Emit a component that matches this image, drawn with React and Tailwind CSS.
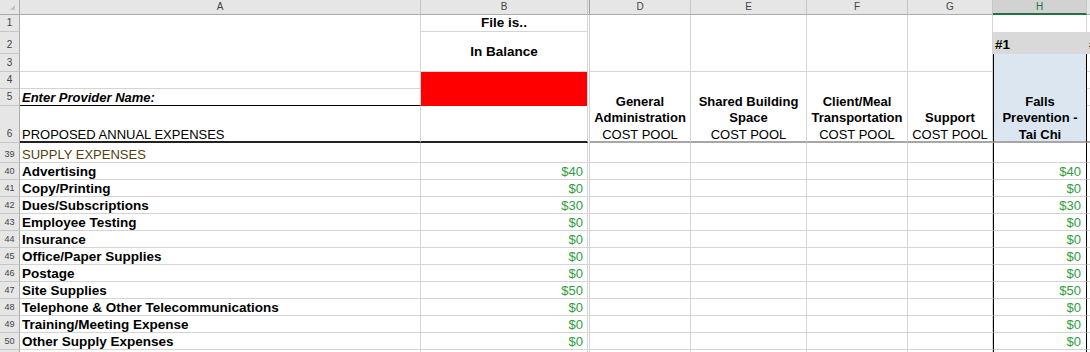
import React from "react";

const COLS = "grid grid-cols-[20px_401px_167px_2px_101px_116px_101px_85px_94px_1fr]";
const G = "border-[#d4d4d4]";

const rows = [
  { n: 39, label: "SUPPLY EXPENSES", kind: "section" },
  { n: 40, label: "Advertising", v: "$40" },
  { n: 41, label: "Copy/Printing", v: "$0" },
  { n: 42, label: "Dues/Subscriptions", v: "$30" },
  { n: 43, label: "Employee Testing", v: "$0" },
  { n: 44, label: "Insurance", v: "$0" },
  { n: 45, label: "Office/Paper Supplies", v: "$0" },
  { n: 46, label: "Postage", v: "$0" },
  { n: 47, label: "Site Supplies", v: "$50" },
  { n: 48, label: "Telephone & Other Telecommunications", v: "$0" },
  { n: 49, label: "Training/Meeting Expense", v: "$0" },
  { n: 50, label: "Other Supply Expenses", v: "$0" },
  { n: "", label: "", v: "" },
];

function ColHead({ children, cls = "" }) {
  return (
    <div className={`flex items-center justify-center bg-[#e6e6e6] border-r border-b border-r-[#c6c6c6] border-b-[#ababab] text-[10px] text-[#444] leading-none ${cls}`}>
      {children}
    </div>
  );
}

function DataRow({ r }) {
  const h = r.kind === "section" ? "h-[20px]" : "h-[17px]";
  return (
    <div className={`${COLS} ${h}`}>
      <div className="flex items-end justify-center bg-[#e6e6e6] border-r border-b border-r-[#ababab] border-b-[#c6c6c6] text-[9px] text-[#444] leading-none pb-[3px]">
        {r.n}
      </div>
      <div className={`flex items-end border-r border-b ${G} pl-[2px] leading-[14px] whitespace-nowrap overflow-hidden ${r.kind === "section" ? "text-[13px] text-[#524210]" : "text-[13.5px] font-bold text-black"}`}>
        {r.label}
      </div>
      <div className={`flex items-end justify-end border-r border-b ${G} pr-[4px] leading-[14px] text-[13px] text-[#2f9e3a]`}>
        {r.v || ""}
      </div>
      <div className={`border-r border-b ${G}`} />
      <div className={`border-r border-b ${G}`} />
      <div className={`border-r border-b ${G}`} />
      <div className={`border-r border-b ${G}`} />
      <div className={`border-r border-b ${G}`} />
      <div className={`flex items-end justify-end border-l border-r border-l-black border-r-black border-b border-b-[#d4d4d4] pr-[5px] leading-[14px] text-[13px] text-[#2f9e3a]`}>
        {r.v || ""}
      </div>
      <div className={`border-b ${G}`} />
    </div>
  );
}

function Head({ cls, lines }) {
  return (
    <div className={`${cls} flex flex-col items-center justify-end border-r border-r-[#d4d4d4] border-b-2 border-b-[#a6a6a6] text-[13px] text-center`}>
      <div className="flex flex-col items-center leading-[16.5px] translate-y-[2px]">
        {lines.map(([t, b], i) => (
          <span key={i} className={b ? "font-bold" : ""}>{t}</span>
        ))}
      </div>
    </div>
  );
}

export default function App() {
  return (
    <div className="w-[1090px] h-[352px] overflow-hidden bg-white font-['Liberation_Sans',Arial,sans-serif] text-black">
      <div className={`${COLS} grid-rows-[15px_17px_22px_18px_17px_17px_37px]`}>
        {/* column header row */}
        <div className="col-start-1 row-start-1 relative bg-[#e6e6e6] border-r border-b border-r-[#ababab] border-b-[#ababab]">
          <svg className="absolute left-[10px] top-[5px]" width="5" height="5" viewBox="0 0 5 5">
            <polygon points="5,0 5,5 0,5" fill="#c2c2c2" />
          </svg>
        </div>
        <ColHead cls="col-start-2 row-start-1">A</ColHead>
        <ColHead cls="col-start-3 row-start-1">B</ColHead>
        <div className="col-start-4 row-start-1 bg-[#e6e6e6] border-r border-b border-r-[#a0a0a0] border-b-[#ababab]" />
        <ColHead cls="col-start-5 row-start-1">D</ColHead>
        <ColHead cls="col-start-6 row-start-1">E</ColHead>
        <ColHead cls="col-start-7 row-start-1">F</ColHead>
        <ColHead cls="col-start-8 row-start-1">G</ColHead>
        <div className="col-start-9 row-start-1 flex items-center justify-center bg-[#d2d2d2] border-r border-r-[#c6c6c6] border-b-2 border-b-[#217346] text-[10px] text-[#217346] leading-none">
          H
        </div>
        <div className="col-start-10 row-start-1 bg-[#e6e6e6] border-b border-b-[#ababab]" />

        {/* row numbers */}
        {[
          ["row-start-2", "1"],
          ["row-start-3", "2"],
          ["row-start-4", "3"],
          ["row-start-5", "4"],
          ["row-start-6", "5"],
          ["row-start-7", "6"],
        ].map(([rs, n]) => (
          <div
            key={n}
            className={`col-start-1 ${rs} flex items-end justify-center bg-[#e6e6e6] border-r border-b border-r-[#ababab] border-b-[#c6c6c6] text-[10px] text-[#444] leading-none pb-[3px]`}
          >
            {n}
          </div>
        ))}

        {/* A1:A3 */}
        <div className={`col-start-2 row-start-2 row-span-3 border-r border-b ${G}`} />
        {/* B1 */}
        <div className={`col-start-3 row-start-2 flex items-center justify-center border-r border-b ${G} text-[13.5px] font-bold leading-none`}>
          File is..
        </div>
        {/* B2:B3 */}
        <div className={`col-start-3 row-start-3 row-span-2 flex items-center justify-center border-r border-b ${G} text-[13.5px] font-bold leading-none`}>
          In Balance
        </div>
        {/* C hidden */}
        <div className={`col-start-4 row-start-2 row-span-6 border-r ${G}`} />
        {/* D1:G3 merged blocks */}
        <div className={`col-start-5 row-start-2 row-span-3 border-r border-b ${G}`} />
        <div className={`col-start-6 row-start-2 row-span-3 border-r border-b ${G}`} />
        <div className={`col-start-7 row-start-2 row-span-3 border-r border-b ${G}`} />
        <div className={`col-start-8 row-start-2 row-span-3 border-r border-b ${G}`} />
        {/* H1, I1 */}
        <div className={`col-start-9 row-start-2 border-r ${G}`} />
        <div className="col-start-10 row-start-2" />
        {/* H2, I2 */}
        <div className="col-start-9 row-start-3 flex items-end bg-[#d9d9d9] pl-[2px] pb-[2px] text-[13.5px] font-bold leading-[14px]">
          #1
        </div>
        <div className="col-start-10 row-start-3 flex items-end bg-[#d9d9d9] pl-[2px] pb-[2px] text-[13.5px] font-bold leading-[14px] overflow-hidden whitespace-nowrap">
          #2
        </div>
        {/* H3:H6 */}
        <div className="col-start-9 row-start-4 row-span-4 flex flex-col items-center justify-end bg-[#dce6f1] border-l border-r border-l-black border-r-black border-b-2 border-b-[#a6a6a6] text-[13px] font-bold text-center">
          <div className="flex flex-col items-center leading-[16.5px] translate-y-[2px]">
            <span>Falls</span>
            <span>Prevention -</span>
            <span>Tai Chi</span>
          </div>
        </div>
        {/* I3..I6 */}
        <div className={`col-start-10 row-start-4 border-b ${G}`} />
        <div className={`col-start-10 row-start-5 border-b ${G}`} />
        <div className={`col-start-10 row-start-6 border-b ${G}`} />
        <div className="col-start-10 row-start-7 border-b-2 border-b-[#a6a6a6]" />

        {/* A4 */}
        <div className={`col-start-2 row-start-5 border-r border-b ${G}`} />
        {/* B4:B5 red */}
        <div className="col-start-3 row-start-5 row-span-2 bg-[#ff0000] border-r border-r-[#d4d4d4]" />
        {/* A5 */}
        <div className="col-start-2 row-start-6 flex items-end border-r border-r-[#d4d4d4] border-b border-b-black pl-[2px] text-[13px] font-bold italic leading-[14px] whitespace-nowrap">
          Enter Provider Name:
        </div>
        {/* A6 */}
        <div className="col-start-2 row-start-7 flex items-end border-r border-r-[#d4d4d4] border-b-2 border-b-[#222] pl-[2px] text-[13px] leading-[14px] whitespace-nowrap">
          <span className="translate-y-[1px]">PROPOSED ANNUAL EXPENSES</span>
        </div>
        {/* B6 */}
        <div className="col-start-3 row-start-7 border-r border-r-[#d4d4d4] border-b-2 border-b-[#222]" />

        {/* D4:G6 headers */}
        <Head cls="col-start-5 row-start-5 row-span-3" lines={[["General", 1], ["Administration", 1], ["COST POOL", 0]]} />
        <Head cls="col-start-6 row-start-5 row-span-3" lines={[["Shared Building", 1], ["Space", 1], ["COST POOL", 0]]} />
        <Head cls="col-start-7 row-start-5 row-span-3" lines={[["Client/Meal", 1], ["Transportation", 1], ["COST POOL", 0]]} />
        <Head cls="col-start-8 row-start-5 row-span-3" lines={[["Support", 1], ["COST POOL", 0]]} />
      </div>

      {rows.map((r, i) => (
        <DataRow key={i} r={r} />
      ))}
    </div>
  );
}
